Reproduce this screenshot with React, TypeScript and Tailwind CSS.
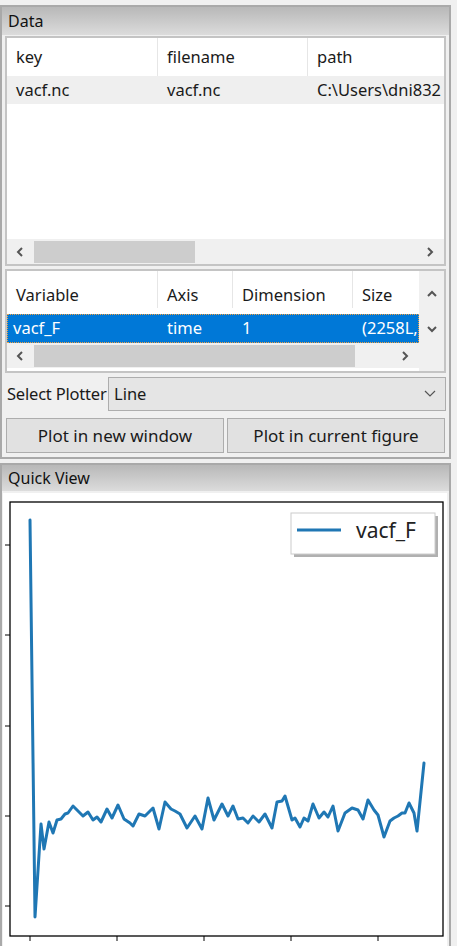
import React from 'react';

const font = { fontFamily: '"Noto Sans", "Open Sans", sans-serif' };

const Chev = ({ dir }: { dir: 'l' | 'r' | 'u' | 'd' }) => {
  const d = {
    l: 'M7 2 L3 6 L7 10',
    r: 'M3 2 L7 6 L3 10',
    u: 'M2 7 L6 3 L10 7',
    d: 'M2 4 L6 8 L10 4',
  }[dir];
  return (
    <svg width="12" height="12" viewBox="0 0 12 12">
      <path d={d} fill="none" stroke="#555" strokeWidth="2" />
    </svg>
  );
};

const points: [number, number][] = [
  [30, 519], [35, 916], [41, 823], [44, 848], [49, 821], [53, 832], [57, 819], [61, 818],
  [65, 813], [68, 812], [73, 805], [80, 812], [83, 815], [88, 811], [93, 819], [97, 816],
  [101, 821], [107, 808], [112, 817], [118, 804], [124, 818], [130, 822], [133, 825],
  [139, 813], [145, 815], [147, 813], [153, 807], [159, 828], [165, 801], [171, 808],
  [175, 810], [180, 813], [187, 827], [195, 815], [202, 828], [208, 797], [214, 819],
  [222, 803], [228, 815], [233, 805], [238, 818], [243, 817], [248, 822], [253, 815],
  [259, 821], [265, 813], [272, 827], [277, 801], [282, 800], [285, 795], [292, 819],
  [295, 817], [300, 826], [304, 817], [308, 820], [313, 803], [319, 817], [324, 811],
  [328, 816], [333, 805], [338, 830], [345, 812], [352, 807], [358, 809], [363, 818],
  [368, 799], [374, 809], [378, 814], [384, 836], [390, 820], [394, 817], [398, 815],
  [402, 812], [405, 812], [409, 802], [414, 812], [417, 830], [424, 762],
];

const HScroll = ({ thumbW }: { thumbW: number }) => (
  <div className="flex items-center h-[25px] bg-[#f0f0f0]">
    <div className="w-[27px] flex justify-center">
      <Chev dir="l" />
    </div>
    <div className="flex-1 h-[22px] flex items-center">
      <div className="h-[22px] bg-[#cdcdcd]" style={{ width: thumbW }} />
    </div>
    <div className="w-[27px] flex justify-center">
      <Chev dir="r" />
    </div>
  </div>
);

const PanelHeader = ({ title, h }: { title: string; h: string }) => (
  <div className={`${h} flex items-center pl-[6px] text-[16px] text-[#111] bg-gradient-to-b from-[#b8b8b8] to-[#dcdcdc]`}>
    {title}
  </div>
);

export default function App() {
  return (
    <div className="w-[457px] h-[946px] bg-[#f0f0f0] overflow-hidden pt-[5px] text-[16.5px] text-[#1a1a1a]" style={font}>
      <div className="w-[451px] border-2 border-[#a9a9a9] bg-[#f0f0f0]">
        <PanelHeader title="Data" h="h-[28px]" />
        <div className="px-[3px] pt-[1px] pb-[4px]">
          {/* data table */}
          <div className="border-2 border-[#c4c4c4] bg-white h-[230px] flex flex-col">
            <div className="flex h-[38px] items-center">
              <div className="w-[151px] h-full pl-[9px] flex items-center border-r border-[#e6e6e6]">key</div>
              <div className="w-[150px] h-full pl-[9px] flex items-center border-r border-[#e6e6e6]">filename</div>
              <div className="flex-1 pl-[9px]">path</div>
            </div>
            <div className="flex h-[28px] items-center bg-[#efefef] whitespace-nowrap overflow-hidden">
              <div className="w-[151px] pl-[9px]">vacf.nc</div>
              <div className="w-[150px] pl-[9px]">vacf.nc</div>
              <div className="flex-1 pl-[9px]">C:\Users\dni832</div>
            </div>
            <div className="flex-1" />
            <HScroll thumbW={161} />
          </div>

          {/* variable table */}
          <div className="mt-[3px] border-2 border-[#c4c4c4] bg-white h-[104px] flex">
            <div className="flex-1 flex flex-col overflow-hidden">
              <div className="flex h-[43px] items-end pb-[6px] whitespace-nowrap">
                <div className="w-[151px] h-full pl-[9px] flex items-end border-r border-[#e6e6e6]">Variable</div>
                <div className="w-[75px] h-full pl-[9px] flex items-end border-r border-[#e6e6e6]">Axis</div>
                <div className="w-[120px] h-full pl-[9px] flex items-end border-r border-[#e6e6e6]">Dimension</div>
                <div className="flex-1 pl-[9px]">Size</div>
              </div>
              <div className="flex h-[29px] items-center bg-[#0078d7] text-white whitespace-nowrap outline-1 outline-dotted outline-[#f0a040] -outline-offset-1">
                <div className="w-[151px] pl-[6px]">vacf_F</div>
                <div className="w-[75px] pl-[9px]">time</div>
                <div className="w-[120px] pl-[9px]">1</div>
                <div className="flex-1 pl-[9px]">(2258L,</div>
              </div>
              <HScroll thumbW={321} />
            </div>
            <div className="w-[25px] bg-[#f0f0f0] flex flex-col items-center pt-[18px]">
              <Chev dir="u" />
              <div className="h-[22px]" />
              <Chev dir="d" />
            </div>
          </div>

          {/* plotter select */}
          <div className="flex items-center mt-[4px] h-[34px]">
            <span className="w-[103px] whitespace-nowrap pl-[2px] tracking-[-0.2px]">Select Plotter</span>
            <div className="flex-1 h-[34px] border border-[#adadad] bg-[#e5e5e5] flex items-center justify-between pl-[5px] pr-[8px]">
              <span>Line</span>
              <svg width="14" height="10" viewBox="0 0 14 10">
                <path d="M2 2 L7 7 L12 2" fill="none" stroke="#555" strokeWidth="1.2" />
              </svg>
            </div>
          </div>

          {/* buttons */}
          <div className="flex gap-[3px] mt-[7px] px-[1px]">
            <button className="flex-1 h-[35px] border border-[#adadad] bg-[#e1e1e1] text-[#1a1a1a] text-[17px]">Plot in new window</button>
            <button className="flex-1 h-[35px] border border-[#adadad] bg-[#e1e1e1] text-[#1a1a1a] text-[17px]">Plot in current figure</button>
          </div>
        </div>
      </div>

      <div className="mt-[4px] w-[451px] h-[500px] border-2 border-[#a9a9a9] bg-[#f0f0f0]">
        <PanelHeader title="Quick View" h="h-[26px]" />
        <div className="pt-[2px] px-[1px]">
          <svg width="444" height="460" viewBox="3 492 444 460" className="block bg-white">
            <rect x="10" y="501" width="433" height="434" fill="white" stroke="#000" strokeWidth="1.3" />
            {[544, 634, 725, 815, 905].map((y) => (
              <line key={y} x1="5" y1={y} x2="10" y2={y} stroke="#000" strokeWidth="1" />
            ))}
            {[30, 117, 204, 291, 378].map((x) => (
              <line key={x} x1={x} y1="935" x2={x} y2="940" stroke="#000" strokeWidth="1" />
            ))}
            <polyline
              points={points.map((p) => p.join(',')).join(' ')}
              fill="none"
              stroke="#1f77b4"
              strokeWidth="3"
              strokeLinejoin="round"
              strokeLinecap="round"
            />
            <rect x="294" y="515" width="144" height="41" fill="#b0b0b0" />
            <rect x="291" y="512" width="144" height="41" fill="white" stroke="#cccccc" strokeWidth="1" />
            <line x1="297" y1="529" x2="341" y2="529" stroke="#1f77b4" strokeWidth="3" />
            <text x="356" y="537" fontSize="21" fill="#222" style={font}>vacf_F</text>
          </svg>
        </div>
      </div>
    </div>
  );
}
